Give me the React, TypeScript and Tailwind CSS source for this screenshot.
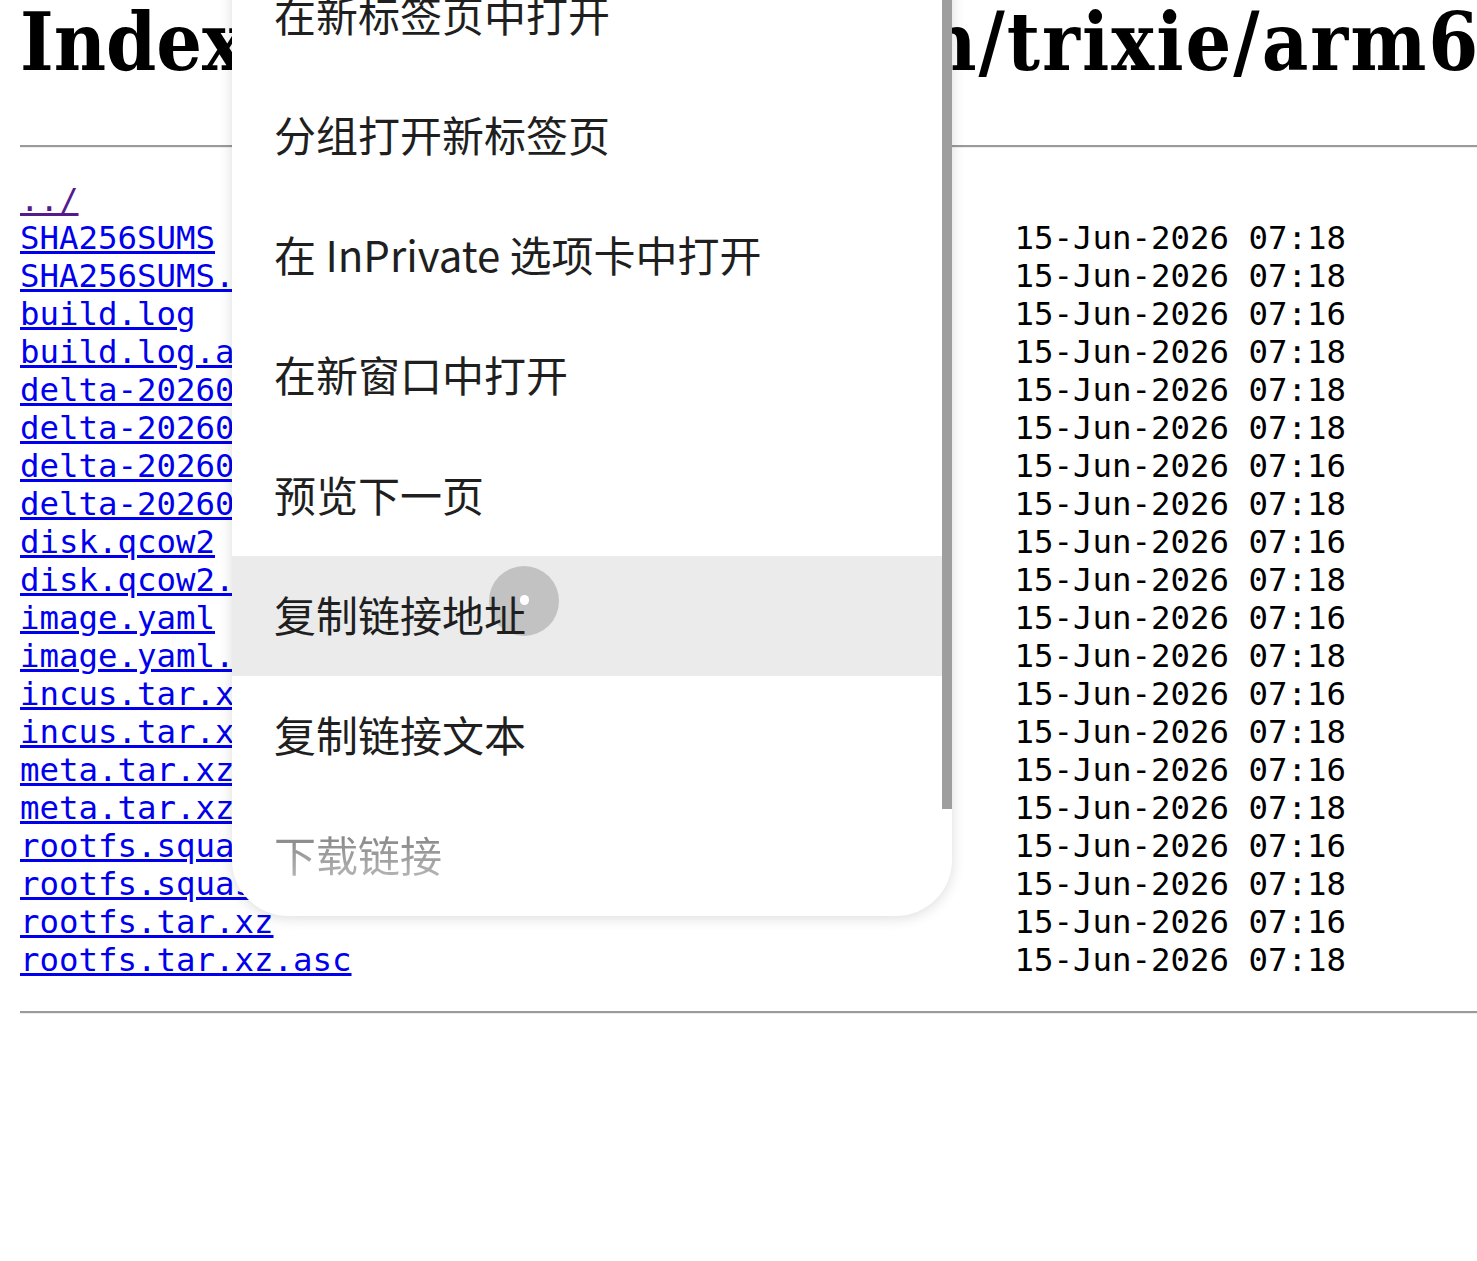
const rows: [string, string][] = [
  ["SHA256SUMS", "07:18"],
  ["SHA256SUMS.asc", "07:18"],
  ["build.log", "07:16"],
  ["build.log.asc", "07:18"],
  ["delta-20260614_07:16.qcow2.vcdiff", "07:18"],
  ["delta-20260614_07:16.qcow2.vcdiff.asc", "07:18"],
  ["delta-20260614_07:16.squashfs.vcdiff", "07:16"],
  ["delta-20260614_07:16.squashfs.vcdiff.asc", "07:18"],
  ["disk.qcow2", "07:16"],
  ["disk.qcow2.asc", "07:18"],
  ["image.yaml", "07:16"],
  ["image.yaml.asc", "07:18"],
  ["incus.tar.xz", "07:16"],
  ["incus.tar.xz.asc", "07:18"],
  ["meta.tar.xz", "07:16"],
  ["meta.tar.xz.asc", "07:18"],
  ["rootfs.squashfs", "07:16"],
  ["rootfs.squashfs.asc", "07:18"],
  ["rootfs.tar.xz", "07:16"],
  ["rootfs.tar.xz.asc", "07:18"],
];

const menuItems = [
  "在新标签页中打开",
  "分组打开新标签页",
  "在 InPrivate 选项卡中打开",
  "在新窗口中打开",
  "预览下一页",
];

const cjk = "font-['Noto_Sans_CJK_SC','Noto_Sans',sans-serif]";
const item = `flex h-[120px] items-center pb-[6px] pl-[42px] text-[42px] ${cjk}`;

const ContextMenu = () => (
  <div className="absolute left-[232px] top-[-44px] w-[720px] overflow-hidden rounded-b-[56px] bg-white shadow-[0_2px_14px_rgba(0,0,0,0.14)]">
    {menuItems.map((label) => (
      <div key={label} className={`${item} text-[#1f1f1f]`}>
        {label}
      </div>
    ))}
    <div className={`${item} relative bg-[#ebebeb] text-[#1f1f1f]`}>
      <div className="absolute left-[257px] top-[10px] h-[70px] w-[70px] rounded-full bg-[#c2c2c2]">
        <div className="absolute left-[31px] top-[29px] h-[10px] w-[9px] rounded-full bg-white" />
      </div>
      <span className="relative">复制链接地址</span>
    </div>
    <div className={`${item} text-[#1f1f1f]`}>复制链接文本</div>
    <div className={item}>
      <span className="bg-linear-to-b from-[#7a7a7a] to-[#bdbdbd] bg-clip-text text-transparent">
        下载链接
      </span>
    </div>
    {/* scrollbar */}
    <div className="absolute right-0 top-0 h-[853px] w-[10px] bg-[#9e9e9e]" />
  </div>
);

const App = () => {
  return (
    <div className="relative h-[1261px] w-[1477px] overflow-hidden bg-white text-black">
      <div className="px-[20px]">
        <h1 className="whitespace-nowrap font-['DejaVu_Serif_Condensed','DejaVu_Serif',serif] text-[80px] font-bold font-stretch-condensed leading-[84px]">
          Index <span className="tracking-[-0.6px]">of /images/debia</span>
          <span className="tracking-[2px]">n/trixie/arm64/default/20260615_07:16/</span>
        </h1>
        <hr className="mt-[61px] w-[1500px] border-t-2 border-b border-t-[#9a9a9a] border-b-[#eeeeee]" />
        <pre className="mt-[33px] whitespace-pre font-['DejaVu_Sans_Mono',monospace] text-[32.4px] leading-[38px]">
          <a href="#" className="text-[#551a8b] underline">
            ../
          </a>
          {"\n"}
          {rows.map(([name, time]) => {
            const shown = name.length > 50 ? name.slice(0, 47) + "..>" : name;
            return (
              <span key={name}>
                <a href="#" className="text-[#0000ee] underline">
                  {shown}
                </a>
                {" ".repeat(51 - shown.length)}
                {`15-Jun-2026 ${time}`}
                {"\n"}
              </span>
            );
          })}
        </pre>
        <hr className="mt-[32px] w-[1500px] border-t-2 border-b border-t-[#9a9a9a] border-b-[#eeeeee]" />
      </div>
      <ContextMenu />
    </div>
  );
};

export default App;
